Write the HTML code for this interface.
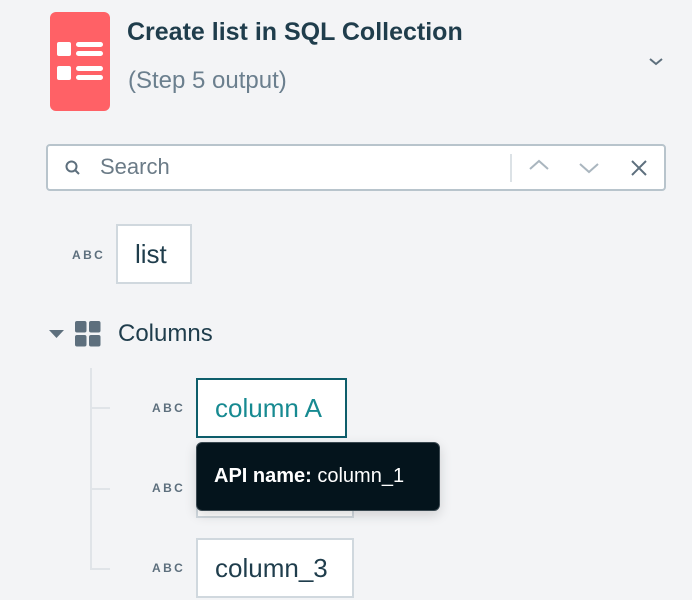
<!DOCTYPE html>
<html><head><style>
body{margin:0;width:692px;height:600px;background:#f3f4f6;font-family:"Liberation Sans",sans-serif;position:relative;overflow:hidden;color:#1f3d4c}
.a{position:absolute}
.abc{position:absolute;font-size:12px;font-weight:bold;letter-spacing:2.4px;color:#5d6f7d}
.box{position:absolute;background:#fff;border:2px solid #d0d8de;box-sizing:border-box;font-size:26px;display:flex;align-items:center;padding-left:17px}
</style></head><body>
<div class="a" style="left:50px;top:12px;width:60px;height:99px;background:#ff6166;border-radius:6px"></div>
<svg class="a" style="left:50px;top:12px" width="60" height="99"><rect x="7" y="30" width="14" height="14" rx="2" fill="#fff"/><rect x="7" y="54" width="14" height="14" rx="2" fill="#fff"/><rect x="26" y="30" width="27" height="5" rx="2.5" fill="#fff"/><rect x="26" y="39" width="27" height="5" rx="2.5" fill="#fff"/><rect x="26" y="54" width="27" height="5" rx="2.5" fill="#fff"/><rect x="26" y="63" width="27" height="5" rx="2.5" fill="#fff"/></svg>
<div class="a" style="left:127px;top:18px;font-size:25px;font-weight:bold;color:#1f3d4c">Create list in SQL Collection</div>
<div class="a" style="left:128px;top:67px;font-size:24px;color:#6b7f8e">(Step 5 output)</div>
<svg class="a" style="left:648px;top:56px" width="16" height="12"><path d="M2 3l6 5 6-5" stroke="#5d6f7d" stroke-width="2" fill="none"/></svg>
<div class="a" style="left:46px;top:144px;width:620px;height:47px;background:#fff;border:2px solid #b8c4cc;border-radius:4px;box-sizing:border-box"></div>
<svg class="a" style="left:64px;top:159px" width="18" height="18"><circle cx="7.5" cy="7.5" r="5" stroke="#5d6f7d" stroke-width="2" fill="none"/><path d="M11 11l4 4" stroke="#5d6f7d" stroke-width="2"/></svg>
<div class="a" style="left:100px;top:154px;font-size:22px;color:#6b7b87">Search</div>
<div class="a" style="left:510px;top:154px;width:2px;height:28px;background:#dce2e6"></div>
<svg class="a" style="left:528px;top:158px" width="22" height="14"><path d="M2 11l9-8 9 8" stroke="#aab6bf" stroke-width="2" fill="none"/></svg>
<svg class="a" style="left:578px;top:161px" width="22" height="14"><path d="M2 3l9 8 9-8" stroke="#aab6bf" stroke-width="2" fill="none"/></svg>
<svg class="a" style="left:630px;top:159px" width="18" height="18"><path d="M2 2l14 14M16 2L2 16" stroke="#5d6f7d" stroke-width="2"/></svg>
<div class="abc" style="left:72px;top:248px">ABC</div>
<div class="box" style="left:116px;top:224px;width:76px;height:60px">list</div>
<svg class="a" style="left:48px;top:328px" width="18" height="12"><path d="M1 2h15l-7.5 8z" fill="#5d6f7d"/></svg>
<svg class="a" style="left:75px;top:321px" width="26" height="26"><rect x="0" y="0" width="11.5" height="11.5" rx="2" fill="#5d6f7d"/><rect x="14" y="0" width="11.5" height="11.5" rx="2" fill="#5d6f7d"/><rect x="0" y="14" width="11.5" height="11.5" rx="2" fill="#5d6f7d"/><rect x="14" y="14" width="11.5" height="11.5" rx="2" fill="#5d6f7d"/></svg>
<div class="a" style="left:118px;top:320px;font-size:24px">Columns</div>
<div class="a" style="left:90px;top:368px;width:2px;height:202px;background:#e0e4e8"></div>
<div class="a" style="left:90px;top:407px;width:20px;height:2px;background:#e0e4e8"></div>
<div class="a" style="left:90px;top:488px;width:20px;height:2px;background:#e0e4e8"></div>
<div class="a" style="left:90px;top:568px;width:20px;height:2px;background:#e0e4e8"></div>
<div class="abc" style="left:152px;top:401px">ABC</div>
<div class="abc" style="left:152px;top:481px">ABC</div>
<div class="abc" style="left:152px;top:561px">ABC</div>
<div class="box" style="left:196px;top:378px;width:151px;height:60px;border-color:#0e5e6b;color:#178a91">column A</div>
<div class="box" style="left:196px;top:458px;width:158px;height:60px">column_2</div>
<div class="box" style="left:196px;top:538px;width:158px;height:60px">column_3</div>
<div class="a" style="left:196px;top:442px;width:244px;height:69px;background:#04141c;border:1px solid #3a4850;border-radius:6px;box-sizing:border-box;color:#fff;font-size:20px;padding:22px 0 0 17px;box-shadow:0 4px 12px rgba(0,0,0,.15)"><b>API name:</b> column_1</div>
</body></html>
